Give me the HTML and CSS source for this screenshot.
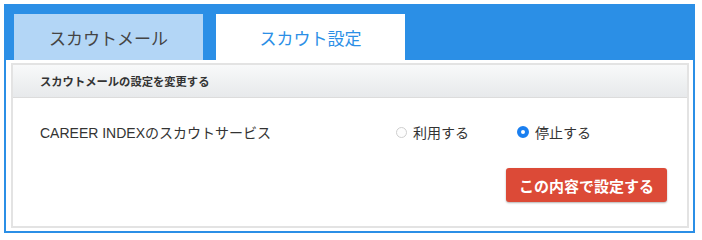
FILE: index.html
```html
<!DOCTYPE html>
<html lang="ja">
<head>
<meta charset="utf-8">
<link rel="stylesheet" href="styles.css">
</head>
<body>
<div class="frame">
  <div class="tabs">
    <div class="tab tab-inactive">スカウトメール</div>
    <div class="tab tab-active">スカウト設定</div>
  </div>
  <div class="content">
    <div class="panel">
      <div class="panel-head">スカウトメールの設定を変更する</div>
      <div class="row">
        <div class="label">CAREER INDEXのスカウトサービス</div>
        <div class="radios">
          <label class="opt"><span class="radio"></span><span class="opt-text">利用する</span></label>
          <label class="opt"><span class="radio radio-on"></span><span class="opt-text">停止する</span></label>
        </div>
      </div>
      <div class="actions">
        <button class="btn">この内容で設定する</button>
      </div>
    </div>
  </div>
</div>
</body>
</html>
```
FILE: styles.css
```css
html, body {
  margin: 0;
  padding: 0;
  background: #ffffff;
}
body {
  font-family: "Liberation Sans", "Noto Sans CJK JP", sans-serif;
  color: #333333;
}
.frame {
  box-sizing: border-box;
  margin: 4px 0 0 4px;
  width: 691px;
  height: 229px;
  border: 2px solid #2b8fe6;
  border-top: 0;
  background: #ffffff;
}
.tabs {
  display: flex;
  gap: 13px;
  height: 56px;
  box-sizing: border-box;
  padding: 10px 0 0 8px;
  background: #2b8fe6;
}
.tab {
  width: 189px;
  height: 46px;
  display: flex;
  align-items: center;
  justify-content: center;
  font-size: 17px;
  padding-top: 1px;
  box-sizing: border-box;
}
.tab-inactive {
  background: #b3d6f6;
  color: #444444;
}
.tab-active {
  background: #ffffff;
  color: #2b8fe6;
}
.content {
  padding: 3px 4px 0 5px;
}
.panel {
  box-sizing: border-box;
  height: 165px;
  border: 2px solid #e3e3e3;
}
.panel-head {
  height: 33px;
  box-sizing: border-box;
  padding-left: 27px;
  display: flex;
  align-items: center;
  font-size: 11.3px;
  font-weight: bold;
  color: #333333;
  background: linear-gradient(#f8f9fa, #e7e9eb);
  border-bottom: 1px solid #dcdcdc;
}
.row {
  display: flex;
  align-items: center;
  height: 20px;
  margin-top: 24px;
  padding-left: 27px;
}
.label {
  width: 356px;
  font-size: 14px;
  color: #333333;
}
.radios {
  display: flex;
}
.opt {
  display: flex;
  align-items: center;
  width: 121px;
  font-size: 14px;
  color: #333333;
}
.radio {
  box-sizing: border-box;
  width: 11px;
  height: 11px;
  border-radius: 50%;
  border: 1px solid #cfcfcf;
  background: #fdfdfd;
  margin-right: 6px;
}
.radio-on {
  width: 12px;
  height: 12px;
  border: 4px solid #1a7ff0;
  background: #ffffff;
  margin-right: 6px;
}
.actions {
  display: flex;
  justify-content: flex-end;
  padding-right: 20px;
  margin-top: 26px;
}
.btn {
  height: 34px;
  width: 161px;
  border: 0;
  border-radius: 3px;
  background: #dc4a37;
  color: #ffffff;
  font-family: "Liberation Sans", "Noto Sans CJK JP", sans-serif;
  font-size: 15px;
  font-weight: bold;
  box-shadow: 0 1px 2px rgba(0,0,0,0.3);
  padding: 0;
}
```
